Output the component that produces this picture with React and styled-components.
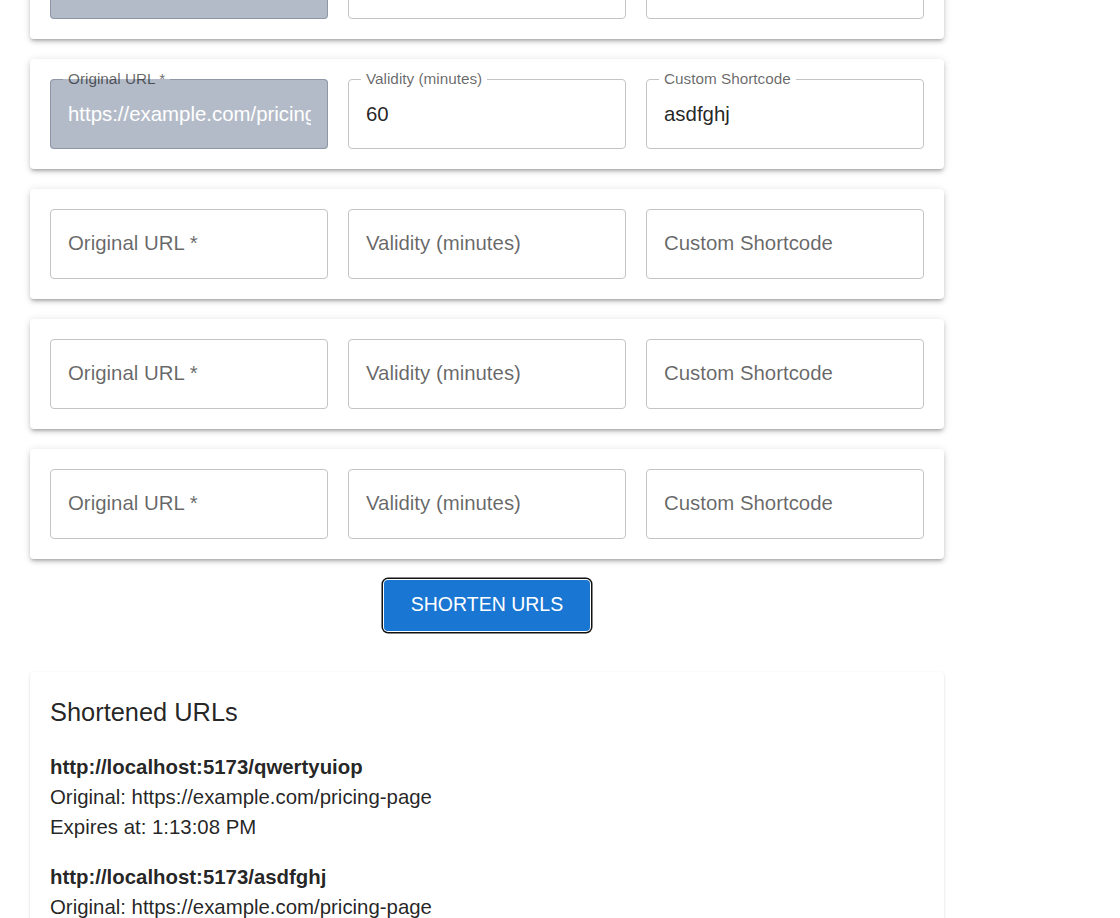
import React from "react";
import styled, { createGlobalStyle } from "styled-components";

const GlobalStyle = createGlobalStyle`
  body {
    margin: 0;
    background: #fff;
    font-family: "Liberation Sans", Arial, sans-serif;
    color: rgba(0, 0, 0, 0.87);
    overflow: hidden;
  }
`;

// page is shown scrolled down, so the first card sits partly above the fold
const Page = styled.main`
  width: 914px;
  padding: 0 0 40px 30px;
  margin-top: -71px;
`;

const Card = styled.section`
  display: grid;
  grid-template-columns: repeat(3, 1fr);
  gap: 20px;
  padding: 20px;
  margin-bottom: 20px;
  background: #fff;
  border-radius: 4px;
  box-shadow: 0 3px 3px -2px rgba(0, 0, 0, 0.2), 0 3px 4px 0 rgba(0, 0, 0, 0.14),
    0 1px 8px 0 rgba(0, 0, 0, 0.12);
`;

const Field = styled.div`
  position: relative;
  height: 70px;
  border-radius: 4px;
  background: ${(p) => (p.$locked ? "#b4bbc8" : "transparent")};
`;

const Outline = styled.fieldset`
  position: absolute;
  inset: -5px 0 0 0;
  margin: 0;
  padding: 0 12px;
  border: 1px solid ${(p) => (p.$locked ? "#8f97a6" : "#c4c4c4")};
  border-radius: 4px;
  pointer-events: none;
  text-align: left;
`;

const Legend = styled.legend`
  height: 11px;
  padding: 0;
  font-size: 15.3px;
  visibility: hidden;
  white-space: nowrap;
  span {
    padding: 0 5px;
    display: inline-block;
  }
`;

const Label = styled.label`
  position: absolute;
  left: 18px;
  white-space: nowrap;
  line-height: 1;
  color: rgba(0, 0, 0, 0.6);
  font-size: ${(p) => (p.$shrink ? "15.3px" : "20.4px")};
  top: ${(p) => (p.$shrink ? "-8px" : "24px")};
`;

const Input = styled.input`
  box-sizing: border-box;
  width: 100%;
  height: 100%;
  padding: 0 17px 0 18px;
  border: 0;
  outline: 0;
  background: transparent;
  font-family: inherit;
  font-size: 20.4px;
  color: ${(p) => (p.$locked ? "#ffffff" : "rgba(0, 0, 0, 0.87)")};
`;

const Actions = styled.div`
  display: flex;
  justify-content: center;
  padding: 1px 0 41px;
`;

const Button = styled.button`
  width: 206px;
  height: 51px;
  padding: 0 0 2px;
  border: 0;
  border-radius: 4px;
  background: #1976d2;
  color: #fff;
  font-family: inherit;
  font-size: 19.5px;
  text-transform: uppercase;
  box-shadow: 0 0 0 1px #fff, 0 0 0 2.5px #111;
  cursor: pointer;
`;

const Results = styled.section`
  padding: 24px 20px 20px;
  background: #fff;
  border-radius: 4px;
  box-shadow: 0 2px 1px -1px rgba(0, 0, 0, 0.2), 0 1px 1px 0 rgba(0, 0, 0, 0.14),
    0 1px 3px 0 rgba(0, 0, 0, 0.12);
`;

const Title = styled.h2`
  margin: 0 0 22px;
  font-size: 25.4px;
  font-weight: 400;
  line-height: 1.334;
`;

const Item = styled.div`
  margin-bottom: 20px;
  font-size: 20.4px;
  line-height: 30px;
`;

const Short = styled.div`
  font-weight: 700;
`;

const rows = [
  { url: "https://example.com/pricing-page", validity: "60", code: "qwertyuiop", locked: true },
  { url: "https://example.com/pricing-page", validity: "60", code: "asdfghj", locked: true },
  { url: "", validity: "", code: "" },
  { url: "", validity: "", code: "" },
  { url: "", validity: "", code: "" },
];

const results = [
  { code: "qwertyuiop", original: "https://example.com/pricing-page", expires: "1:13:08 PM" },
  { code: "asdfghj", original: "https://example.com/pricing-page", expires: "1:13:08 PM" },
];

const TextField = ({ label, value, locked }) => {
  const shrink = value !== "";
  return (
    <Field $locked={locked}>
      <Label $shrink={shrink}>{label}</Label>
      <Input value={value} $locked={locked} readOnly />
      <Outline $locked={locked}>
        <Legend>{shrink && <span>{label}</span>}</Legend>
      </Outline>
    </Field>
  );
};

const App = () => (
  <>
    <GlobalStyle />
    <Page>
      {rows.map((r, i) => (
        <Card key={i}>
          <TextField label="Original URL *" value={r.url} locked={r.locked} />
          <TextField label="Validity (minutes)" value={r.validity} />
          <TextField label="Custom Shortcode" value={r.code} />
        </Card>
      ))}
      <Actions>
        <Button>Shorten URLs</Button>
      </Actions>
      <Results>
        <Title>Shortened URLs</Title>
        {results.map((r) => (
          <Item key={r.code}>
            <Short>http://localhost:5173/{r.code}</Short>
            <div>Original: {r.original}</div>
            <div>Expires at: {r.expires}</div>
          </Item>
        ))}
      </Results>
    </Page>
  </>
);

export default App;
